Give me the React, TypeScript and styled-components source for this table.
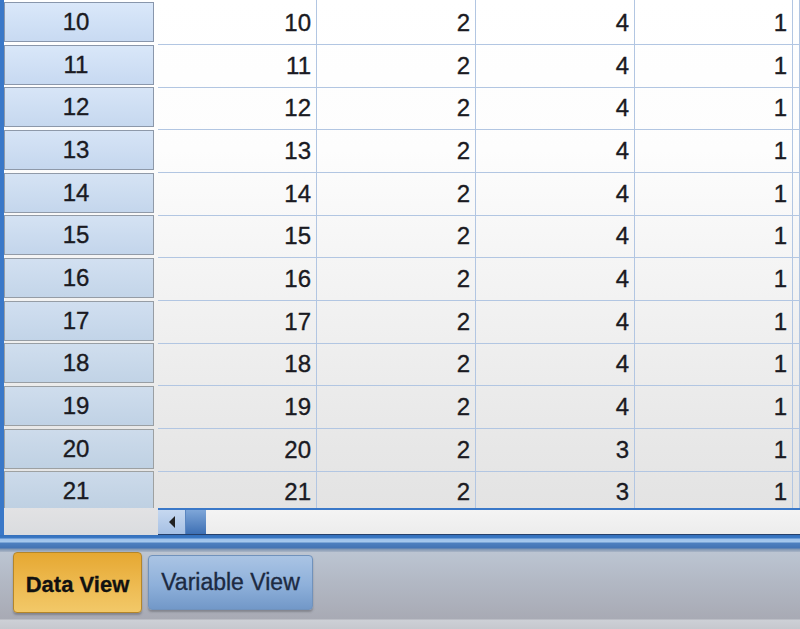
import React from "react";
import styled, { createGlobalStyle } from "styled-components";

const Global = createGlobalStyle`
  html, body { margin: 0; padding: 0; background: #a8abb5; }
  body { font-family: "Liberation Sans", Arial, sans-serif; }
`;

const Screen = styled.div`
  width: 800px;
  height: 629px;
  overflow: hidden;
  display: flex;
  flex-direction: column;
  background: #a8abb5;
`;

const Window = styled.div`
  display: flex;
  flex-direction: column;
  border-left: 4px solid #3a78c8;
  background: #ffffff;
`;

const Viewport = styled.div`
  height: 508px;
  overflow: hidden;
  background: linear-gradient(to bottom, #ffffff 0px, #fdfdfd 150px, #e9e9e9 420px, #e3e3e3 508px);
`;

const Row = styled.div`
  display: grid;
  grid-template-columns: 154px 159px 159px 159px 158px 1fr;
  height: 42.67px;
`;

const RowHeader = styled.div<{ $shade: number }>`
  box-sizing: border-box;
  margin: 2px 4px 3px 0;
  border: 1px solid ${(p) => `rgb(${136 + p.$shade * 2}, ${150 + p.$shade}, ${172 - p.$shade})`};
  background: ${(p) => {
    const t = p.$shade / 11;
    const r1 = Math.round(218 - 14 * t);
    const g1 = Math.round(232 - 14 * t);
    const b1 = Math.round(250 - 16 * t);
    const r2 = Math.round(200 - 10 * t);
    const g2 = Math.round(218 - 10 * t);
    const b2 = Math.round(242 - 16 * t);
    return `linear-gradient(to bottom, rgb(${r1},${g1},${b1}), rgb(${r2},${g2},${b2}))`;
  }};
  color: #1a1a22;
  font-size: 24px;
  line-height: 36px;
  padding-top: 1px;
  text-align: center;
  padding-right: 6px;
  -webkit-text-stroke: 0.35px #1a1a22;
`;

const Cell = styled.div`
  box-sizing: border-box;
  border-right: 1px solid #b2c6e2;
  border-bottom: 1px solid #b2c6e2;
  color: #1a1a22;
  font-size: 24px;
  line-height: 42px;
  padding-top: 2px;
  text-align: right;
  padding-right: 5px;
  -webkit-text-stroke: 0.35px #1a1a22;
`;

const ScrollRow = styled.div`
  display: flex;
  height: 27px;
`;

const ScrollSpacer = styled.div`
  width: 154px;
  background: linear-gradient(to bottom, #e2e2e4, #dadcdf);
`;

const ScrollBar = styled.div`
  flex: 1;
  display: flex;
  box-sizing: border-box;
  border-top: 2px solid #3a78c8;
  border-bottom: 1px solid #26406a;
  background: linear-gradient(to bottom, #f4f4f4, #ececec);
`;

const ArrowButton = styled.div`
  width: 27px;
  display: flex;
  align-items: center;
  justify-content: center;
  background: linear-gradient(to bottom, #c6d8f0, #a6c0e4);
`;

const Thumb = styled.div`
  width: 20px;
  background: linear-gradient(to bottom, #7ea6d8, #3e70b4);
  border-left: 1px solid #5a86c0;
`;

const Frame = styled.div`
  height: 17px;
  background: linear-gradient(
    to bottom,
    #3470bc 0px,
    #3a78c4 3px,
    #9cc0ea 4px,
    #a8caee 7px,
    #4e80c0 8px,
    #4474b4 13px,
    #7e94b2 14px,
    #aab6c6 17px
  );
`;

const TabBar = styled.div`
  flex: 1;
  display: flex;
  align-items: flex-start;
  gap: 6px;
  padding-left: 13px;
  background: linear-gradient(
    to bottom,
    #bcc5d2 0px,
    #b2b8c4 30px,
    #a8aab4 67px,
    #cdd0d6 68px,
    #c6c8ce 77px
  );
`;

const Tab = styled.div<{ $active?: boolean }>`
  box-sizing: border-box;
  display: flex;
  align-items: center;
  justify-content: center;
  height: ${(p) => (p.$active ? "61px" : "55px")};
  width: ${(p) => (p.$active ? "129px" : "165px")};
  margin-top: ${(p) => (p.$active ? "0" : "3px")};
  border-radius: 4px;
  font-size: ${(p) => (p.$active ? "22px" : "23px")};
  font-weight: ${(p) => (p.$active ? 700 : 400)};
  color: ${(p) => (p.$active ? "#111" : "#1c2a42")};
  padding-top: ${(p) => (p.$active ? "4px" : "0")};
  -webkit-text-stroke: ${(p) => (p.$active ? "0.3px #111" : "0.35px #1c2a42")};
  border: 1px solid ${(p) => (p.$active ? "#b4862a" : "#7092bc")};
  background: ${(p) =>
    p.$active
      ? "linear-gradient(to bottom, #e6a832, #eebc54 60%, #f2c868)"
      : "linear-gradient(to bottom, #aac4e4, #8eb0da 55%, #7298c8)"};
  box-shadow: 0 2px 2px rgba(60, 60, 70, 0.35);
`;

const rows: [number, number, number, number][] = [
  [10, 2, 4, 1],
  [11, 2, 4, 1],
  [12, 2, 4, 1],
  [13, 2, 4, 1],
  [14, 2, 4, 1],
  [15, 2, 4, 1],
  [16, 2, 4, 1],
  [17, 2, 4, 1],
  [18, 2, 4, 1],
  [19, 2, 4, 1],
  [20, 2, 3, 1],
  [21, 2, 3, 1],
];

export default function App() {
  return (
    <Screen>
      <Global />
      <Window>
        <Viewport>
          {rows.map((r, i) => (
            <Row key={r[0]}>
              <RowHeader $shade={i}>{r[0]}</RowHeader>
              <Cell>{r[0]}</Cell>
              <Cell>{r[1]}</Cell>
              <Cell>{r[2]}</Cell>
              <Cell>{r[3]}</Cell>
              <Cell />
            </Row>
          ))}
        </Viewport>
        <ScrollRow>
          <ScrollSpacer />
          <ScrollBar>
            <ArrowButton>
              <svg width="10" height="14" viewBox="0 0 10 14">
                <path d="M8 1 L2 7 L8 13 Z" fill="#222" />
              </svg>
            </ArrowButton>
            <Thumb />
          </ScrollBar>
        </ScrollRow>
      </Window>
      <Frame />
      <TabBar>
        <Tab $active>Data View</Tab>
        <Tab>Variable View</Tab>
      </TabBar>
    </Screen>
  );
}
